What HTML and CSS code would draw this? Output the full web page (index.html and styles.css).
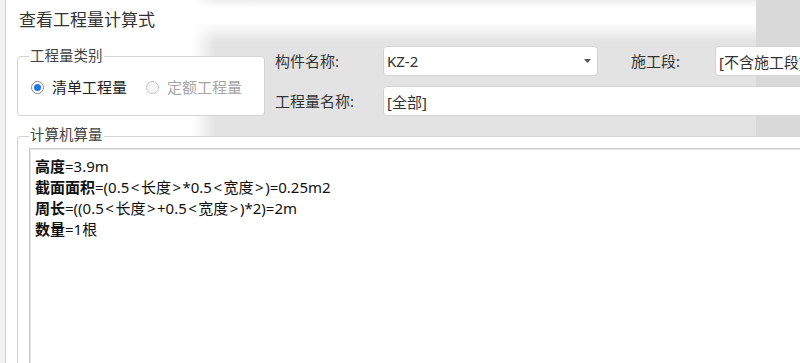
FILE: index.html
```html
<!DOCTYPE html>
<html lang="zh-CN">
<head>
<meta charset="utf-8">
<title>查看工程量计算式</title>
<link rel="stylesheet" href="styles.css">
</head>
<body>
<div class="window">
  <div class="head">
    <div class="title">查看工程量计算式</div>
    <div class="top">
      <div class="group group-type">
        <div class="legend">工程量类别</div>
        <div class="radios">
          <label class="radio checked"><span class="dot"></span>清单工程量</label>
          <label class="radio disabled"><span class="dot"></span>定额工程量</label>
        </div>
      </div>
      <div class="form">
        <span class="lbl">构件名称:</span>
        <div class="combo combo-name"><span>KZ-2</span><svg class="arrow" width="7" height="4" viewBox="0 0 7 4"><polygon points="0,0 7,0 3.5,4" fill="#555"/></svg></div>
        <span class="lbl lbl-stage">施工段:</span>
        <div class="combo combo-stage">[不含施工段]</div>
        <span class="lbl">工程量名称:</span>
        <div class="combo combo-qty">[全部]</div>
      </div>
    </div>
  </div>
  <div class="group group-calc">
    <div class="legend">计算机算量</div>
    <div class="textarea">
      <div class="line"><b>高度</b>=3.9m</div>
      <div class="line"><b>截面面积</b>=(0.5<span class="op">&lt;</span>长度<span class="op">&gt;</span>*0.5<span class="op">&lt;</span>宽度<span class="op">&gt;</span>)=0.25m2</div>
      <div class="line"><b>周长</b>=((0.5<span class="op">&lt;</span>长度<span class="op">&gt;</span>+0.5<span class="op">&lt;</span>宽度<span class="op">&gt;</span>)*2)=2m</div>
      <div class="line"><b>数量</b>=1根</div>
    </div>
  </div>
</div>
</body>
</html>
```
FILE: styles.css
```css
html, body {
  margin: 0;
  height: 100%;
  overflow: hidden;
}
body {
  width: 800px;
  height: 363px;
  background: #f2f2f2;
  font-family: "Noto Sans", "Noto Sans CJK SC", sans-serif;
  color: #333;
}
.window {
  margin-left: 5px;
  border-left: 1px solid #d0d0d0;
  background: #fff;
  height: 363px;
  width: 794px;
  overflow: hidden;
}
.head {
  height: 136px;
  background:
    linear-gradient(#d9d9d9, #d9d9d9) right top / 44px 100% no-repeat,
    linear-gradient(to right, #fff, rgba(255,255,255,0)) 187px 0 / 22px 100% no-repeat,
    linear-gradient(#eeeeee, rgba(255,255,255,0)) 187px 0 / 100% 8px no-repeat,
    linear-gradient(#fff 22px, rgba(255,255,255,0) 42px) 187px 0 / 100% 42px no-repeat,
    linear-gradient(#e3e3e3, #e3e3e3) 187px 0 / 100% 100% no-repeat,
    #fff;
}
.title {
  height: 40px;
  line-height: 40px;
  padding-left: 13px;
  font-size: 17px;
  color: #333;
}
.top {
  display: flex;
  padding-left: 11px;
}
.group-type {
  flex: none;
  width: 248px;
  height: 60px;
  box-sizing: border-box;
  border: 1px solid #d3d3d3;
  border-radius: 4px;
  background: #fff;
  margin-top: 16px;
}
.legend {
  display: block;
  width: max-content;
  margin-left: 11px;
  padding: 0 1px;
  background: #fff;
  font-size: 14.5px;
  line-height: 16px;
  color: #444;
}
.group-type .legend {
  margin-top: -10px;
}
.radios {
  display: flex;
  gap: 19px;
  margin-top: 12px;
  padding-left: 13px;
}
.radio {
  display: flex;
  align-items: center;
  gap: 8px;
  font-size: 15px;
  line-height: 24px;
  color: #222;
}
.dot {
  width: 13px;
  height: 13px;
  box-sizing: border-box;
  border: 1px solid #8a8a8a;
  border-radius: 50%;
  background: #fff;
  display: flex;
  align-items: center;
  justify-content: center;
}
.checked .dot::after {
  content: "";
  width: 7px;
  height: 7px;
  border-radius: 50%;
  background: #1e78e6;
}
.disabled {
  color: #a6a6a6;
}
.disabled .dot {
  border-color: #c4c4c4;
  background: #f7f7f7;
}
.form {
  flex: none;
  display: grid;
  grid-template-columns: 108px 215px 117px 120px;
  grid-template-rows: 30px 30px;
  row-gap: 10px;
  align-items: center;
  margin-left: 10px;
  margin-top: 6px;
}
.lbl {
  font-size: 15px;
  line-height: 30px;
  color: #333;
}
.lbl-stage {
  padding-left: 33px;
}
.combo {
  height: 30px;
  box-sizing: border-box;
  border: 1px solid #d4d4d4;
  border-radius: 4px;
  background: #fff;
  display: flex;
  align-items: center;
  padding-left: 3px;
  font-size: 15px;
  color: #333;
  white-space: nowrap;
  overflow: hidden;
}
.combo-name {
  justify-content: space-between;
  padding-right: 6px;
}
.combo-qty {
  grid-column: 2 / span 3;
}
.group-calc {
  margin-left: 11px;
  border-top: 1px solid #d3d3d3;
  border-left: 1px solid #d3d3d3;
  border-top-left-radius: 4px;
  height: 300px;
}
.group-calc .legend {
  margin-top: -11px;
}
.textarea {
  margin-left: 11px;
  margin-top: 6px;
  border-top: 1px solid #c8c8c8;
  border-left: 1px solid #c8c8c8;
  box-shadow: inset 1px 1px 0 #e8e8e8;
  background: #fff;
  padding: 7px 0 0 5px;
  height: 300px;
  font-size: 15px;
  line-height: 21px;
  color: #111;
}
.textarea b {
  font-weight: 700;
}
.op {
  margin: 0 1.5px;
}
```
